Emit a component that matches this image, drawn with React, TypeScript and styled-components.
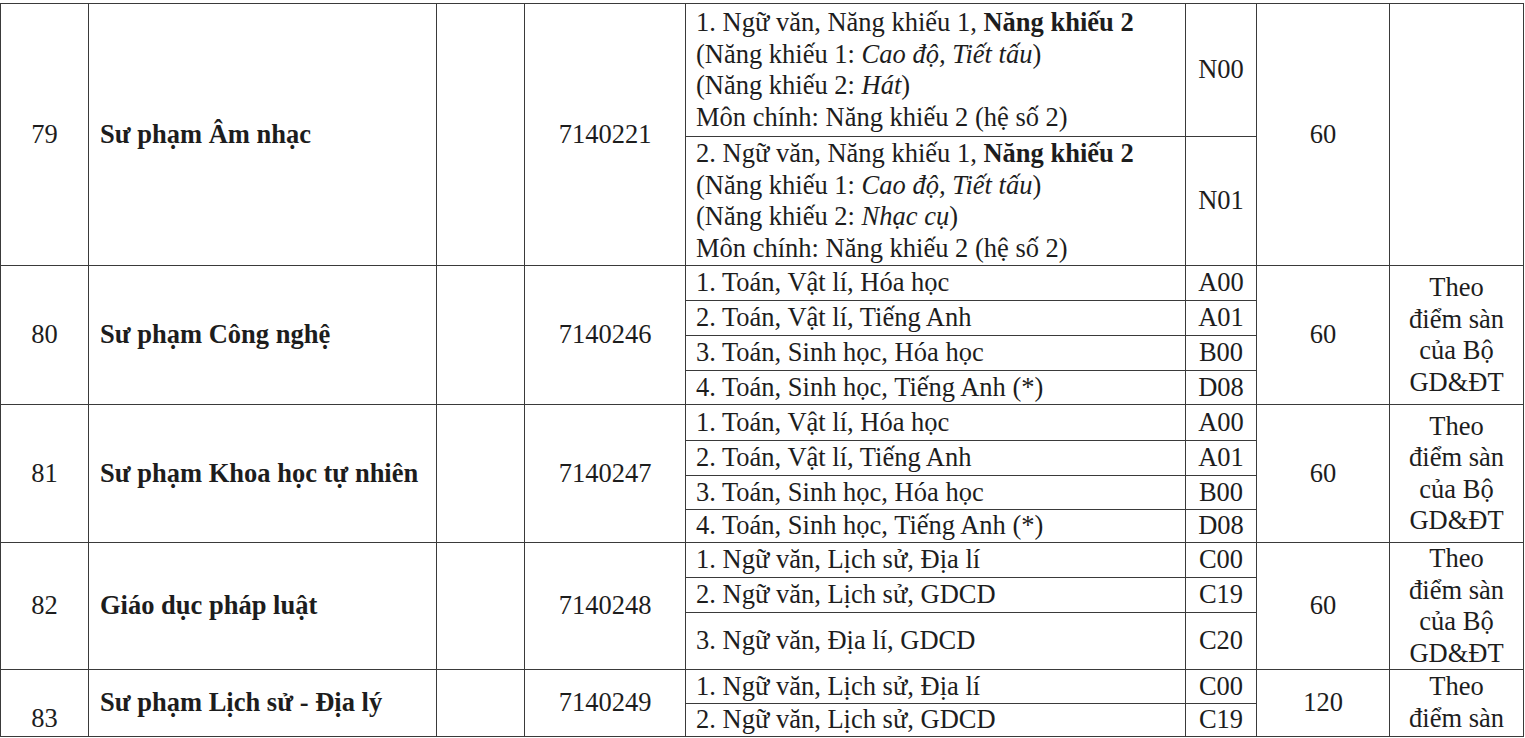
import React from "react";
import styled, { createGlobalStyle } from "styled-components";

const GlobalStyle = createGlobalStyle`
  html, body {
    margin: 0;
    padding: 0;
    background: #ffffff;
  }
  body {
    font-family: "Liberation Serif", "Times New Roman", serif;
    color: #1d1d1d;
  }
`;

const Page = styled.div`
  width: 1525px;
  height: 738px;
  padding-top: 3px;
  box-sizing: border-box;
  overflow: hidden;
`;

const Table = styled.table`
  width: 1523px;
  border-collapse: collapse;
  table-layout: fixed;
  font-size: 26.5px;
  line-height: 31.5px;
`;

const Row = styled.tr<{ $h: number }>`
  height: ${(p) => p.$h}px;
`;

const Cell = styled.td`
  border: 1px solid #3a3a3a;
  padding: 0 2px;
  text-align: center;
  vertical-align: middle;
  overflow: hidden;
`;

const NumCell = styled(Cell)<{ $low?: boolean }>`
  vertical-align: ${(p) => (p.$low ? "bottom" : "middle")};
  padding-bottom: ${(p) => (p.$low ? "1px" : "0")};
`;

const NameCell = styled(Cell)`
  text-align: left;
  padding-left: 11px;
  font-weight: bold;
`;

const ComboCell = styled(Cell)`
  text-align: left;
  padding-left: 10px;
  white-space: nowrap;
`;

const NoteCell = styled(Cell)`
  padding: 0 4px;
`;

const Line = styled.div``;

const B = styled.b`
  font-weight: bold;
`;

const I = styled.i`
  font-style: italic;
`;

type Combo = { text: React.ReactNode; block: string; h: number };

type Major = {
  no: string;
  name: string;
  code: string;
  quota: string;
  note: string[];
  combos: Combo[];
  lowNo?: boolean;
};

const talent = (n: string, second: string) => (
  <>
    <Line>
      {n}. Ngữ văn, Năng khiếu 1, <B>Năng khiếu 2</B>
    </Line>
    <Line>
      (Năng khiếu 1: <I>Cao độ, Tiết tấu</I>)
    </Line>
    <Line>
      (Năng khiếu 2: <I>{second}</I>)
    </Line>
    <Line>Môn chính: Năng khiếu 2 (hệ số 2)</Line>
  </>
);

const floorNote = ["Theo", "điểm sàn", "của Bộ", "GD&ĐT"];

const science = (hs: number[]): Combo[] => [
  { text: "1. Toán, Vật lí, Hóa học", block: "A00", h: hs[0] },
  { text: "2. Toán, Vật lí, Tiếng Anh", block: "A01", h: hs[1] },
  { text: "3. Toán, Sinh học, Hóa học", block: "B00", h: hs[2] },
  { text: "4. Toán, Sinh học, Tiếng Anh (*)", block: "D08", h: hs[3] },
];

const majors: Major[] = [
  {
    no: "79",
    name: "Sư phạm Âm nhạc",
    code: "7140221",
    quota: "60",
    note: [],
    combos: [
      { text: talent("1", "Hát"), block: "N00", h: 133 },
      { text: talent("2", "Nhạc cụ"), block: "N01", h: 129 },
    ],
  },
  {
    no: "80",
    name: "Sư phạm Công nghệ",
    code: "7140246",
    quota: "60",
    note: floorNote,
    combos: science([35, 35, 35, 34]),
  },
  {
    no: "81",
    name: "Sư phạm Khoa học tự nhiên",
    code: "7140247",
    quota: "60",
    note: floorNote,
    combos: science([36, 35, 34, 33]),
  },
  {
    no: "82",
    name: "Giáo dục pháp luật",
    code: "7140248",
    quota: "60",
    note: floorNote,
    combos: [
      { text: "1. Ngữ văn, Lịch sử, Địa lí", block: "C00", h: 35 },
      { text: "2. Ngữ văn, Lịch sử, GDCD", block: "C19", h: 34 },
      { text: "3. Ngữ văn, Địa lí, GDCD", block: "C20", h: 57 },
    ],
  },
  {
    no: "83",
    name: "Sư phạm Lịch sử - Địa lý",
    code: "7140249",
    quota: "120",
    note: ["Theo", "điểm sàn"],
    lowNo: true,
    combos: [
      { text: "1. Ngữ văn, Lịch sử, Địa lí", block: "C00", h: 34 },
      { text: "2. Ngữ văn, Lịch sử, GDCD", block: "C19", h: 32 },
    ],
  },
];

function MajorRows({ m }: { m: Major }) {
  const span = m.combos.length;
  return (
    <>
      {m.combos.map((c, i) => (
        <Row key={c.block + i} $h={c.h}>
          {i === 0 && (
            <>
              <NumCell rowSpan={span} $low={m.lowNo}>
                {m.no}
              </NumCell>
              <NameCell rowSpan={span}>{m.name}</NameCell>
              <Cell rowSpan={span} />
              <Cell rowSpan={span}>{m.code}</Cell>
            </>
          )}
          <ComboCell>{c.text}</ComboCell>
          <Cell>{c.block}</Cell>
          {i === 0 && (
            <>
              <Cell rowSpan={span}>{m.quota}</Cell>
              <NoteCell rowSpan={span}>
                {m.note.map((n) => (
                  <Line key={n}>{n}</Line>
                ))}
              </NoteCell>
            </>
          )}
        </Row>
      ))}
    </>
  );
}

export default function App() {
  const widths = [88, 348, 88, 161, 500, 71, 133, 134];
  return (
    <Page>
      <GlobalStyle />
      <Table>
        <colgroup>
          {widths.map((w, i) => (
            <col key={i} style={{ width: w }} />
          ))}
        </colgroup>
        <tbody>
          {majors.map((m) => (
            <MajorRows key={m.no} m={m} />
          ))}
        </tbody>
      </Table>
    </Page>
  );
}
